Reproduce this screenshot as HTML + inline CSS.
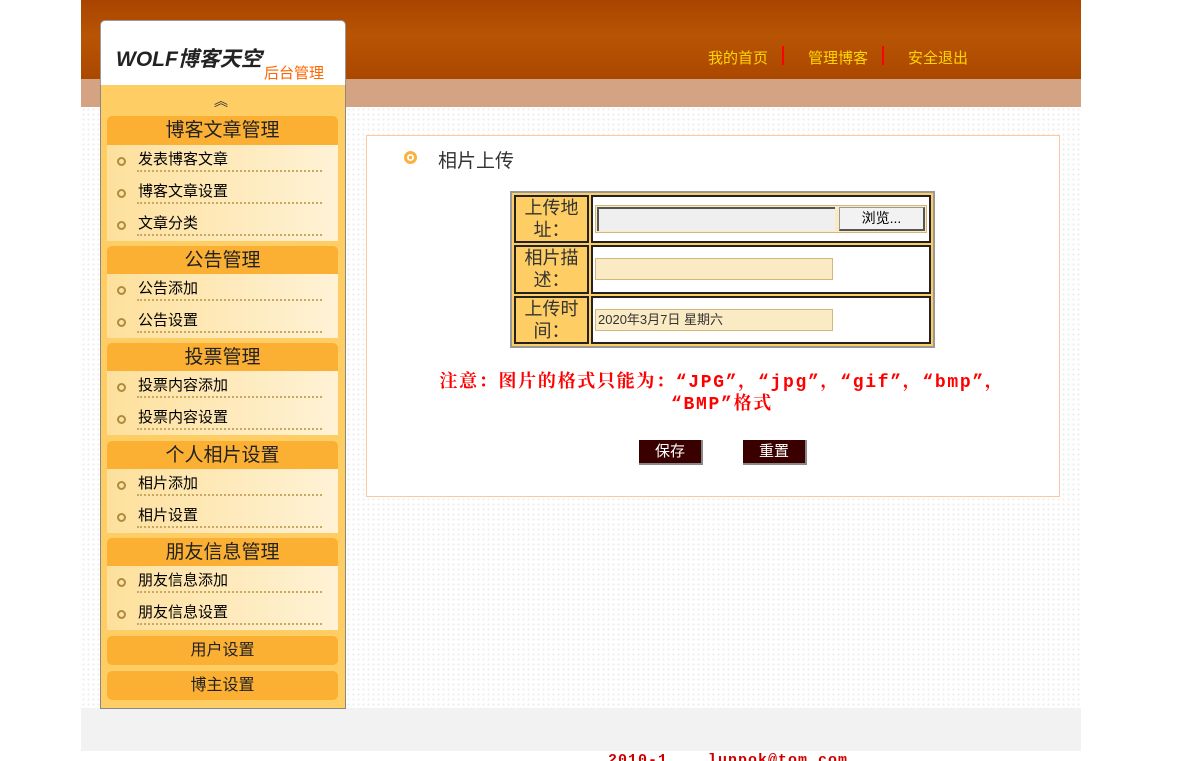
<!DOCTYPE html>
<html><head><meta charset="utf-8"><style>
*{margin:0;padding:0;box-sizing:border-box}
body{width:1203px;height:761px;background:#fff;font-family:"Liberation Sans","Noto Sans CJK SC",sans-serif;position:relative;overflow:hidden}
.abs{position:absolute}
#hdr{left:81px;top:0;width:1000px;height:79px;background:linear-gradient(180deg,#a84400 0%,#b85404 45%,#aa4800 100%)}
#band{left:81px;top:79px;width:1000px;height:28px;background:#d3a384}
#main{left:81px;top:107px;width:1000px;height:601px;background-color:#fff;background-image:radial-gradient(#ececec 1px,transparent 1.2px);background-size:5px 5px}
#foot{left:81px;top:708px;width:1000px;height:43px;background:#f2f2f2}
.nav{top:47px;color:#ffd700;font-size:15px}
.sep{top:46px;width:2px;height:19px;background:#f00}
#logo{left:100px;top:20px;width:246px;height:66px;background:#fff;border:1px solid #999;border-bottom:1px dashed #999;border-radius:5px 5px 0 0}
#side{left:100px;top:85px;width:246px;height:624px;background:#fece64;border:1px solid #888;border-top:none}
.h{position:absolute;left:6px;width:231px;height:29px;background:#fbb034;border-radius:5px 5px 0 0;text-align:center;font-size:19px;line-height:29px;color:#222}
.h2{font-size:16px;border-radius:5px}
.items{position:absolute;left:6px;width:231px;background:linear-gradient(90deg,#fde09c,#fff2d6)}
.it{height:32px;position:relative;font-size:15px;line-height:30px;padding-left:31px;color:#000}
.it:after{content:"";position:absolute;left:30px;right:16px;bottom:5px;border-bottom:2px dotted #c9a962}
.it:before{content:"";position:absolute;left:10px;top:12px;width:9px;height:9px;border:2px solid #b08a40;border-radius:50%;box-sizing:border-box}
#box{left:366px;top:135px;width:694px;height:362px;border:1px solid #fcc8a0;background:#fff}
table{position:absolute;left:510px;top:191px;width:425px;height:157px;border:2px solid #999;border-collapse:separate;border-spacing:2px;background:#fece64}
td{border:2px solid #222;background:#fff}
td.l{background:#fece64;width:84px;text-align:center;font-size:18px;line-height:22px;color:#333;height:48px}
.inp{height:22px;width:238px;background:#fbebc5;border:1px solid #d2b67a;font-size:13px;line-height:20px;padding-left:2px;color:#333}
.btn{background:#3a0000;color:#fff;font-size:15px;text-align:center;line-height:24px;width:64px;height:25px;border-right:2px solid #888;border-bottom:2px solid #888}
</style></head><body>
<div class="abs" id="hdr"></div><div class="abs" id="band"></div>
<div class="abs" id="main"></div><div class="abs" id="foot"></div>
<div class="abs" style="left:608px;top:751px;font:bold 15px 'Liberation Mono',monospace;color:#c00;height:10px;overflow:hidden;line-height:20px;letter-spacing:1px">2010-1 &nbsp;&nbsp;&nbsp;lunpok@tom.com</div>
<div class="abs nav" style="left:708px">我的首页</div><div class="abs sep" style="left:782px"></div>
<div class="abs nav" style="left:808px">管理博客</div><div class="abs sep" style="left:882px"></div>
<div class="abs nav" style="left:908px">安全退出</div>
<div class="abs" id="logo"><div class="abs" style="left:15px;top:22px;font-size:21px;font-style:italic;font-weight:bold;color:#222">WOLF博客天空</div><div class="abs" style="left:163px;top:41px;font-size:15px;color:#f60">后台管理</div></div>
<div class="abs" id="side">
<div class="abs" style="left:113px;top:6px;font-size:14px;color:#333">︽</div>
<div class="h" style="top:31px">博客文章管理</div>
<div class="items" style="top:60px"><div class="it">发表博客文章</div><div class="it">博客文章设置</div><div class="it">文章分类</div></div>
<div class="h" style="top:161px">公告管理</div>
<div class="items" style="top:189px"><div class="it">公告添加</div><div class="it">公告设置</div></div>
<div class="h" style="top:258px">投票管理</div>
<div class="items" style="top:286px"><div class="it">投票内容添加</div><div class="it">投票内容设置</div></div>
<div class="h" style="top:356px">个人相片设置</div>
<div class="items" style="top:384px"><div class="it">相片添加</div><div class="it">相片设置</div></div>
<div class="h" style="top:453px">朋友信息管理</div>
<div class="items" style="top:481px"><div class="it">朋友信息添加</div><div class="it">朋友信息设置</div></div>
<div class="h h2" style="top:551px">用户设置</div>
<div class="h h2" style="top:586px">博主设置</div>
</div>
<div class="abs" id="box"></div>
<div class="abs" style="left:404px;top:151px;width:13px;height:13px;border:3px solid #fbb040;border-radius:50%;background:#fff"><div style="margin:2px;width:3px;height:3px;background:#fbb040"></div></div>
<div class="abs" style="left:438px;top:146px;font-size:19px;color:#333">相片上传</div>
<table>
<tr><td class="l">上传地<br>址：</td><td style="padding:0 2px"><div style="display:flex;border:1px solid #d2b67a;background:#fbebc5;padding:1px"><div style="width:238px;height:24px;background:#efefef;border-top:2px solid #555;border-left:2px solid #555"></div><div style="width:86px;height:24px;margin-left:4px;background:#f2f2f2;border:1px solid #999;border-right:2px solid #555;border-bottom:2px solid #555;font-size:14px;text-align:center;line-height:21px">浏览...</div></div></td></tr>
<tr><td class="l">相片描<br>述：</td><td style="padding-left:2px"><div class="inp"></div></td></tr>
<tr><td class="l">上传时<br>间：</td><td style="padding-left:2px"><div class="inp">2020年3月7日 星期六</div></td></tr>
</table>
<div class="abs" style="left:346px;top:372px;width:752px;text-align:center;color:#f00;letter-spacing:1.7px;font:bold 18px/22px 'Liberation Mono','Noto Serif CJK SC',monospace;white-space:nowrap">注意：图片的格式只能为：“JPG”，“jpg”，“gif”，“bmp”，<br>“BMP”格式</div>
<div class="abs btn" style="left:639px;top:440px">保存</div>
<div class="abs btn" style="left:743px;top:440px">重置</div>
</body></html>
